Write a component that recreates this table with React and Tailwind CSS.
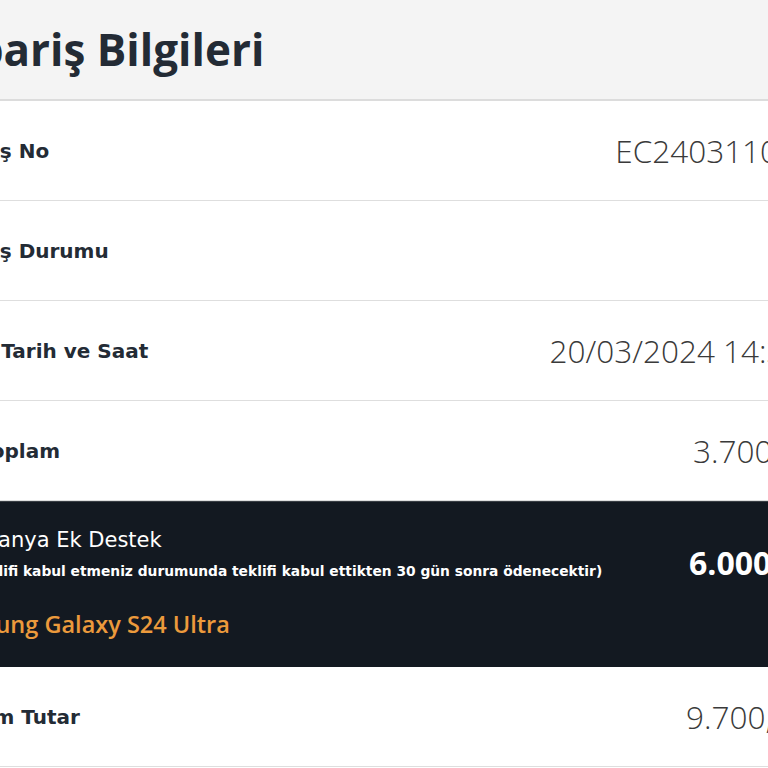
import React from "react";

const labelCls =
  "font-['DejaVu_Sans',sans-serif] font-bold text-[20px] leading-[28px] text-[#232b35] whitespace-nowrap";
const valueCls =
  "font-['Open_Sans',sans-serif] font-light text-[31.5px] leading-[40px] text-[#3a3a3a] whitespace-nowrap";

function Row({ label, value, valueShift = "" }) {
  return (
    <div className="h-[100px] border-b border-[#dedede] flex items-center justify-between bg-white">
      <div className={labelCls}>{label}</div>
      <div className={valueCls + " " + valueShift}>{value}</div>
    </div>
  );
}

export default function App() {
  return (
    <div className="w-[768px] h-[768px] overflow-hidden bg-white">
      <div className="w-[914px] -ml-[66px]">
        <div className="h-[101px] border-b-2 border-[#dcdcdc] bg-[#f4f4f4] flex items-center -mx-[200px] px-[204px]">
          <h1 className="font-['Open_Sans',sans-serif] font-bold text-[44px] leading-[56px] text-[#232b35] whitespace-nowrap pb-[2px]">
            Sipariş Bilgileri
          </h1>
        </div>
        <Row label="Sipariş No" value="EC24031100123" valueShift="-mr-[2px]" />
        <Row label="Sipariş Durumu" value="" />
        <Row label="Teklif Tarih ve Saat" value="20/03/2024 14:32:15" valueShift="mr-[2px]" />
        <Row label="Ara Toplam" value="3.700,00 TL" valueShift="-mr-[8px]" />
        <div className="h-[166px] bg-[#131921] border-t border-[#3a3f45] flex items-start justify-between -mx-[200px] px-[200px]">
          <div className="pt-[26px] whitespace-nowrap">
            <div className="ml-[4px] font-['DejaVu_Sans',sans-serif] text-[21px] leading-[24px] text-white">
              Kampanya Ek Destek
            </div>
            <div className="mt-[10px] ml-[32px] font-['DejaVu_Sans',sans-serif] font-bold text-[13.8px] leading-[18px] text-white">
              (Teklifi kabul etmeniz durumunda teklifi kabul ettikten 30 gün sonra ödenecektir)
            </div>
            <div className="mt-[29px] ml-[1px] font-['Open_Sans',sans-serif] text-[23.5px] leading-[30px] font-semibold text-[#ec9a3c]">
              Samsung Galaxy S24 Ultra
            </div>
          </div>
          <div className="pt-[40px] -mr-[14px] font-['Open_Sans',sans-serif] font-bold text-[32px] leading-[42px] text-white whitespace-nowrap">
            6.000,00 TL
          </div>
        </div>
        <Row label="Toplam Tutar" value="9.700,00 TL" valueShift="-mr-[1px]" />
      </div>
    </div>
  );
}
